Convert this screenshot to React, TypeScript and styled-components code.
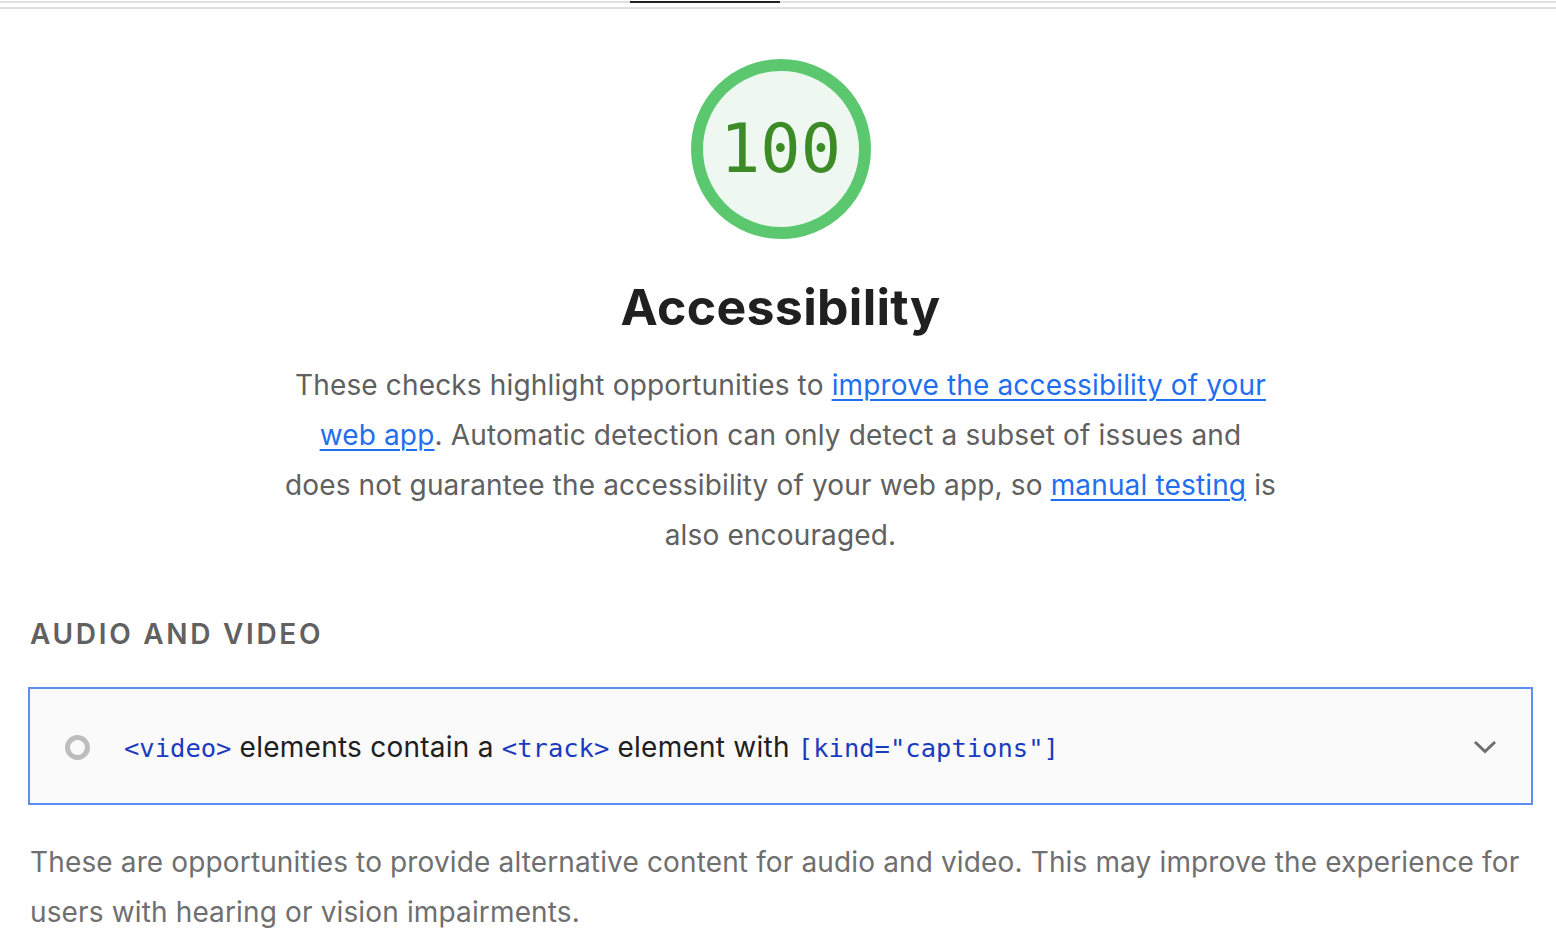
import React from "react";
import styled, { createGlobalStyle } from "styled-components";

const GlobalStyle = createGlobalStyle`
  html, body { margin: 0; padding: 0; background: #ffffff; }
  body { font-family: Inter, "Liberation Sans", Arial, sans-serif; }
  * { box-sizing: border-box; }
`;

const Page = styled.div`
  width: 1556px;
  height: 936px;
  overflow: hidden;
  background: #ffffff;
`;

const TabRule = styled.div`
  display: flex;
  flex-direction: column;
  gap: 4px;
  padding-top: 1px;
`;

const RuleLine = styled.div<{ $indicator?: boolean }>`
  height: 2px;
  background: #e0e0e0;
  display: flex;
  padding-left: 630px;
  & > span {
    display: ${(p) => (p.$indicator ? "block" : "none")};
    width: 150px;
    height: 2px;
    background: #202124;
  }
`;

const Content = styled.main`
  padding: 0 23px 0 28px;
  display: flex;
  flex-direction: column;
`;

const Header = styled.section`
  display: flex;
  flex-direction: column;
  align-items: center;
  padding-top: 50px;
`;

const Gauge = styled.div`
  width: 180px;
  height: 180px;
  border-radius: 50%;
  border: 12px solid #5bc86f;
  background: #eef8f1;
  display: flex;
  align-items: center;
  justify-content: center;
  font-family: "DejaVu Sans Mono", "Liberation Mono", monospace;
  font-size: 67px;
  color: #3d8b27;
  line-height: 1;
`;

const Title = styled.h1`
  margin: 38px 0 0;
  font-size: 50px;
  line-height: 60px;
  font-weight: 700;
  color: #202020;
  letter-spacing: 0.3px;
`;

const Description = styled.p`
  margin: 23px 0 0;
  max-width: 1010px;
  text-align: center;
  font-size: 28px;
  line-height: 50px;
  letter-spacing: 0.15px;
  color: #606060;
`;

const Link = styled.a`
  color: #1f6ff0;
  text-decoration: underline;
  text-underline-offset: 4px;
  text-decoration-thickness: 2px;
`;

const GroupTitle = styled.h2`
  margin: 54px 0 0 2px;
  font-size: 28px;
  line-height: 40px;
  font-weight: 600;
  letter-spacing: 2.7px;
  color: #616161;
  text-transform: uppercase;
`;

const Audit = styled.div`
  margin-top: 33px;
  height: 118px;
  border: 2px solid #5b8ff0;
  background: #fafafa;
  display: flex;
  align-items: center;
  padding: 2px 34px 0 35px;
  gap: 34px;
`;

const StatusIcon = styled.span`
  width: 25px;
  height: 25px;
  border-radius: 50%;
  border: 5px solid #bdbdbd;
  flex: none;
`;

const AuditTitle = styled.div`
  flex: 1;
  font-size: 28px;
  line-height: 40px;
  letter-spacing: 0.25px;
  color: #202020;
`;

const Code = styled.code`
  font-family: "DejaVu Sans Mono", "Liberation Mono", monospace;
  font-size: 25.5px;
  letter-spacing: 0;
  color: #1a3bbf;
`;

const Chevron = styled.svg`
  width: 24px;
  height: 16px;
  flex: none;
`;

const GroupDescription = styled.p`
  margin: 32px 0 0 2px;
  font-size: 28px;
  line-height: 50px;
  letter-spacing: 0.14px;
  color: #6f6f6f;
`;

export default function App() {
  return (
    <Page>
      <GlobalStyle />
      <TabRule>
        <RuleLine $indicator>
          <span />
        </RuleLine>
        <RuleLine />
      </TabRule>
      <Content>
        <Header>
          <Gauge>100</Gauge>
          <Title>Accessibility</Title>
          <Description>
            These checks highlight opportunities to{" "}
            <Link href="#">improve the accessibility of your web app</Link>.
            Automatic detection can only detect a subset of issues and
            <br />
            does not guarantee the accessibility of your web app, so{" "}
            <Link href="#">manual testing</Link> is
            <br />
            also encouraged.
          </Description>
        </Header>
        <GroupTitle>Audio and video</GroupTitle>
        <Audit>
          <StatusIcon />
          <AuditTitle>
            <Code>&lt;video&gt;</Code> elements contain a{" "}
            <Code>&lt;track&gt;</Code> element with{" "}
            <Code>[kind="captions"]</Code>
          </AuditTitle>
          <Chevron viewBox="0 0 24 16">
            <path
              d="M2 3 L12 12.5 L22 3"
              fill="none"
              stroke="#6e6e6e"
              strokeWidth="3"
            />
          </Chevron>
        </Audit>
        <GroupDescription>
          These are opportunities to provide alternative content for audio and
          video. This may improve the experience for users with hearing or
          vision impairments.
        </GroupDescription>
      </Content>
    </Page>
  );
}
